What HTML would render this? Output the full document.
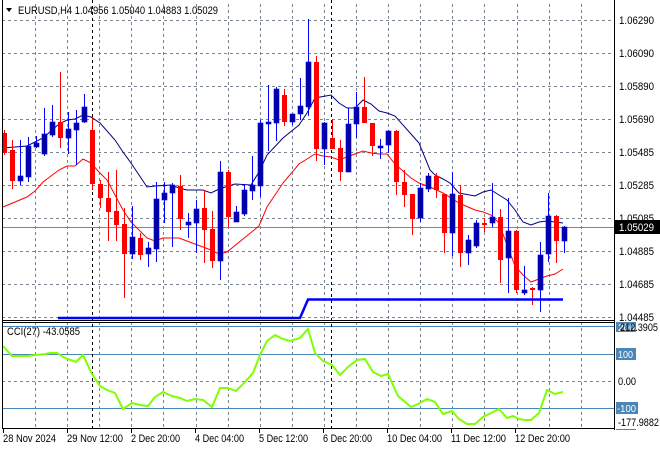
<!DOCTYPE html>
<html><head><meta charset="utf-8">
<style>
html,body{margin:0;padding:0;background:#fff;}
#c{position:relative;width:660px;height:450px;overflow:hidden;background:#fff;font-family:"Liberation Sans",sans-serif;}
svg{position:absolute;left:0;top:0;}
.t{font-family:"Liberation Sans",sans-serif;font-size:11px;fill:#000;}
</style></head><body>
<div id="c">
<svg id="s" width="660" height="450" viewBox="0 0 660 450" xmlns="http://www.w3.org/2000/svg">
<g id="grid" stroke="#7a8593" stroke-width="1" stroke-dasharray="3,3" fill="none"></g>
<g stroke="#4a86b8" stroke-width="1">
<line x1="2" y1="326.5" x2="614" y2="326.5"/>
<line x1="2" y1="354.5" x2="614" y2="354.5"/>
<line x1="2" y1="408.5" x2="614" y2="408.5"/>
</g>
<line x1="2" y1="381.5" x2="614" y2="381.5" stroke="#7a8593" stroke-dasharray="3,3"/>
<line x1="2" y1="227.5" x2="614" y2="227.5" stroke="#7f8790" stroke-width="1"/>
<line x1="92.5" y1="0" x2="92.5" y2="428" stroke="#000" stroke-dasharray="3,3"/>
<line x1="331.5" y1="0" x2="331.5" y2="428" stroke="#000" stroke-dasharray="3,3"/>
<g id="lines"></g>
<g id="candles"></g>
<polyline points="58,318 300,318 308,299.5 563,299.5" fill="none" stroke="#0000ff" stroke-width="2.5"/>
<line x1="2.5" y1="0" x2="2.5" y2="429" stroke="#000"/>
<line x1="614.5" y1="0" x2="614.5" y2="430" stroke="#000"/>
<line x1="2" y1="320.5" x2="615" y2="320.5" stroke="#000"/>
<line x1="2" y1="322.5" x2="615" y2="322.5" stroke="#000"/>
<line x1="2" y1="428.5" x2="615" y2="428.5" stroke="#000"/>
<polygon points="6,8 12,8 9,12" fill="#000"/>
<text class="t" x="18" y="14" textLength="200" lengthAdjust="spacingAndGlyphs">EURUSD,H4  1.04956 1.05040 1.04883 1.05029</text>
<text class="t" x="7" y="335" textLength="73" lengthAdjust="spacingAndGlyphs">CCI(27) -43.0585</text>
<g>
<text class="t" x="619" y="24" textLength="35" lengthAdjust="spacingAndGlyphs">1.06290</text>
<text class="t" x="619" y="57" textLength="35" lengthAdjust="spacingAndGlyphs">1.06090</text>
<text class="t" x="619" y="90" textLength="35" lengthAdjust="spacingAndGlyphs">1.05890</text>
<text class="t" x="619" y="123" textLength="35" lengthAdjust="spacingAndGlyphs">1.05690</text>
<text class="t" x="619" y="156" textLength="35" lengthAdjust="spacingAndGlyphs">1.05485</text>
<text class="t" x="619" y="189" textLength="35" lengthAdjust="spacingAndGlyphs">1.05285</text>
<text class="t" x="619" y="222" textLength="35" lengthAdjust="spacingAndGlyphs">1.05085</text>
<text class="t" x="619" y="255" textLength="35" lengthAdjust="spacingAndGlyphs">1.04885</text>
<text class="t" x="619" y="288" textLength="35" lengthAdjust="spacingAndGlyphs">1.04685</text>
<text class="t" x="619" y="321" textLength="35" lengthAdjust="spacingAndGlyphs">1.04485</text>
</g>
<rect x="614" y="220" width="46" height="14" fill="#000"/>
<text class="t" x="619" y="231" style="fill:#fff" textLength="35" lengthAdjust="spacingAndGlyphs">1.05029</text>
<rect x="616" y="322" width="20" height="10" fill="#4a86b8"/>
<text class="t" x="618" y="331" style="fill:#fff;font-size:10px">200</text>
<text class="t" x="620" y="331" textLength="38" lengthAdjust="spacingAndGlyphs">212.3905</text>
<rect x="616" y="348" width="20" height="12" fill="#4a86b8"/>
<text class="t" x="618" y="358" style="fill:#fff;font-size:10px" textLength="15" lengthAdjust="spacingAndGlyphs">100</text>
<text class="t" x="618" y="385" textLength="18" lengthAdjust="spacingAndGlyphs">0.00</text>
<rect x="616" y="402" width="22" height="12" fill="#4a86b8"/>
<text class="t" x="617" y="412" style="fill:#fff;font-size:10px" textLength="19" lengthAdjust="spacingAndGlyphs">-100</text>
<text class="t" x="618" y="426" textLength="41" lengthAdjust="spacingAndGlyphs">-177.9882</text>
<line x1="616" y1="429.5" x2="636" y2="429.5" stroke="#4a86b8"/>
<g stroke="#000">
<line x1="3.5" y1="428" x2="3.5" y2="433"/><line x1="67.5" y1="428" x2="67.5" y2="433"/><line x1="131.5" y1="428" x2="131.5" y2="433"/><line x1="195.5" y1="428" x2="195.5" y2="433"/><line x1="259.5" y1="428" x2="259.5" y2="433"/><line x1="323.5" y1="428" x2="323.5" y2="433"/><line x1="387.5" y1="428" x2="387.5" y2="433"/><line x1="451.5" y1="428" x2="451.5" y2="433"/><line x1="515.5" y1="428" x2="515.5" y2="433"/>
</g>
<text class="t" x="3" y="442" textLength="53" lengthAdjust="spacingAndGlyphs">28 Nov 2024</text>
<text class="t" x="67" y="442" textLength="56" lengthAdjust="spacingAndGlyphs">29 Nov 12:00</text>
<text class="t" x="131" y="442" textLength="49" lengthAdjust="spacingAndGlyphs">2 Dec 20:00</text>
<text class="t" x="195" y="442" textLength="49" lengthAdjust="spacingAndGlyphs">4 Dec 04:00</text>
<text class="t" x="259" y="442" textLength="49" lengthAdjust="spacingAndGlyphs">5 Dec 12:00</text>
<text class="t" x="323" y="442" textLength="49" lengthAdjust="spacingAndGlyphs">6 Dec 20:00</text>
<text class="t" x="387" y="442" textLength="55" lengthAdjust="spacingAndGlyphs">10 Dec 04:00</text>
<text class="t" x="451" y="442" textLength="55" lengthAdjust="spacingAndGlyphs">11 Dec 12:00</text>
<text class="t" x="515" y="442" textLength="55" lengthAdjust="spacingAndGlyphs">12 Dec 20:00</text>
</svg>
</div>
<script>
var NS="http://www.w3.org/2000/svg";
function el(p,n,a){var e=document.createElementNS(NS,n);for(var k in a)e.setAttribute(k,a[k]);p.appendChild(e);return e;}
var g=document.getElementById('grid');
for(var k=0;k<18;k++){var x=Math.round(35+32.1*k)+0.5;el(g,'line',{x1:x,y1:4,x2:x,y2:428});}
for(var k=0;k<10;k++){var y=20+33*k+0.5;el(g,'line',{x1:2,y1:y,x2:614,y2:y});}
var D=[
[0,'r',130,133,153,155],[1,'r',140,150,181,189],[2,'b',140,176,181,185],[3,'b',137,146,177,182],[4,'b',136,143,147,148],
[5,'b',108,134,154,156],[6,'b',105,122,135,137],[7,'r',72,122,138,148],[8,'b',112,129,138,154],[9,'b',110,123,130,165],
[10,'b',94,107,122,123],[11,'r',117,130,184,190],[12,'r',180,184,198,208],[13,'r',172,198,212,241],[14,'r',170,211,225,241],
[15,'r',208,224,254,298],[16,'b',206,237,254,259],[17,'r',233,238,255,260],[18,'b',242,248,254,267],[19,'b',182,199,249,262],
[20,'b',182,193,200,223],[21,'b',183,185,193,247],[22,'r',175,186,219,230],[23,'b',213,222,225,238],[24,'b',200,209,223,253],
[25,'r',190,208,230,263],[26,'r',211,229,261,268],[27,'b',161,172,261,280],[28,'r',170,172,217,227],[29,'b',206,212,222,222],
[30,'b',184,190,214,216],[31,'b',156,185,191,200],[32,'b',120,123,186,197],[33,'b',85,122,124,151],[34,'b',87,89,123,141],
[35,'r',89,95,122,126],[36,'b',114,114,122,125],[37,'b',78,106,114,120],[38,'b',19,62,107,116],[39,'r',56,62,149,161],
[40,'b',122,123,149,165],[41,'r',119,138,149,149],[42,'r',140,148,172,181],[43,'b',108,124,172,172],[44,'b',92,107,124,138],
[45,'r',77,107,123,123],[46,'r',123,123,146,156],[47,'b',139,146,147,159],[48,'b',130,131,145,153],[49,'r',130,131,182,195],
[50,'r',170,182,195,207],[51,'r',194,194,219,235],[52,'b',183,188,218,222],[53,'b',173,176,189,192],[54,'r',173,176,190,198],
[55,'r',194,194,233,253],[56,'b',172,194,233,256],[57,'r',185,195,253,267],[58,'b',235,240,253,265],[59,'b',220,223,246,248],
[60,'r',218,223,224,232],[61,'b',183,217,223,227],[62,'r',209,217,260,283],[63,'b',198,231,258,293],[64,'r',230,231,290,293],
[65,'b',266,290,293,295],[66,'r',287,288,290,305],[67,'b',242,255,290,312],[68,'b',193,216,254,262],[69,'r',215,216,241,263],
[70,'b',226,227,241,253]];
var cg=document.getElementById('candles');
D.forEach(function(d){var x=4+8*d[0];var red=d[1]=='r';
 el(cg,'rect',{x:x,y:d[2],width:1,height:Math.max(1,d[5]-d[2]),fill:red?'#ff0000':'#0000ff'});
 el(cg,'rect',{x:x-2,y:d[3],width:5,height:Math.max(2,d[4]-d[3]),fill:red?'#ff0000':'#00009c',stroke:red?'none':'#0000ff','stroke-width':0.6});
});
var lg=document.getElementById('lines');
var navy="3,148 27,146 43,138 59,124 67,120 75,119 83,115 91,117 100,123 115,140 123,152 131,163 147,187 155,186 171,185 179,188 187,190 203,190 211,193 219,189 235,184 251,185 259,172 267,155 283,138 299,125 307,113 315,98 331,95 339,103 347,108 355,108 363,100 371,104 379,111 387,113 395,116 411,134 419,143 430,170 435,175 443,179 450,183 459,193 475,196 483,192 491,190 499,195 507,200 515,210 523,222 531,225 539,222 547,221 555,222 563,223";
var redl="3,207 27,197 35,191 43,182 59,170 67,166 75,166 83,159 91,163 99,172 107,180 115,195 123,210 131,222 147,238 155,241 163,238 179,238 195,244 211,250 219,254 227,252 243,239 259,226 267,207 283,183 299,164 315,154 323,156 331,157 339,160 347,157 355,154 363,151 371,153 379,154 387,154 395,164 411,178 419,183 430,187 443,193 459,203 475,210 483,212 491,215 499,223 507,245 515,266 523,275 531,282 539,279 547,276 555,274 563,269";
var cci="3,346 12,356 27,356 45,354 50,353 57,353 65,358 76,362 83,355 92,374 100,386 107,390 115,393 123,409 132,403 140,405 148,406 155,397 163,392 172,396 180,398 187,401 195,399 203,400 212,407 220,388 228,388 236,391 245,382 253,373 260,355 267,341 275,335 283,339 290,341 300,338 308,329 315,353 323,361 332,365 340,375 348,367 357,360 365,359 373,372 381,376 388,374 398,396 411,407 418,404 427,399 435,402 443,414 452,411 459,419 467,424 475,424 483,417 491,413 499,409 507,418 513,416 519,419 525,420 531,420 539,413 547,390 555,394 563,392";
el(lg,'polyline',{points:navy,fill:'none',stroke:'#000080','stroke-width':1});
el(lg,'polyline',{points:redl,fill:'none',stroke:'#ff0000','stroke-width':1});
el(lg,'polyline',{points:cci,fill:'none',stroke:'#7fff00','stroke-width':2});
</script>
</body></html>
